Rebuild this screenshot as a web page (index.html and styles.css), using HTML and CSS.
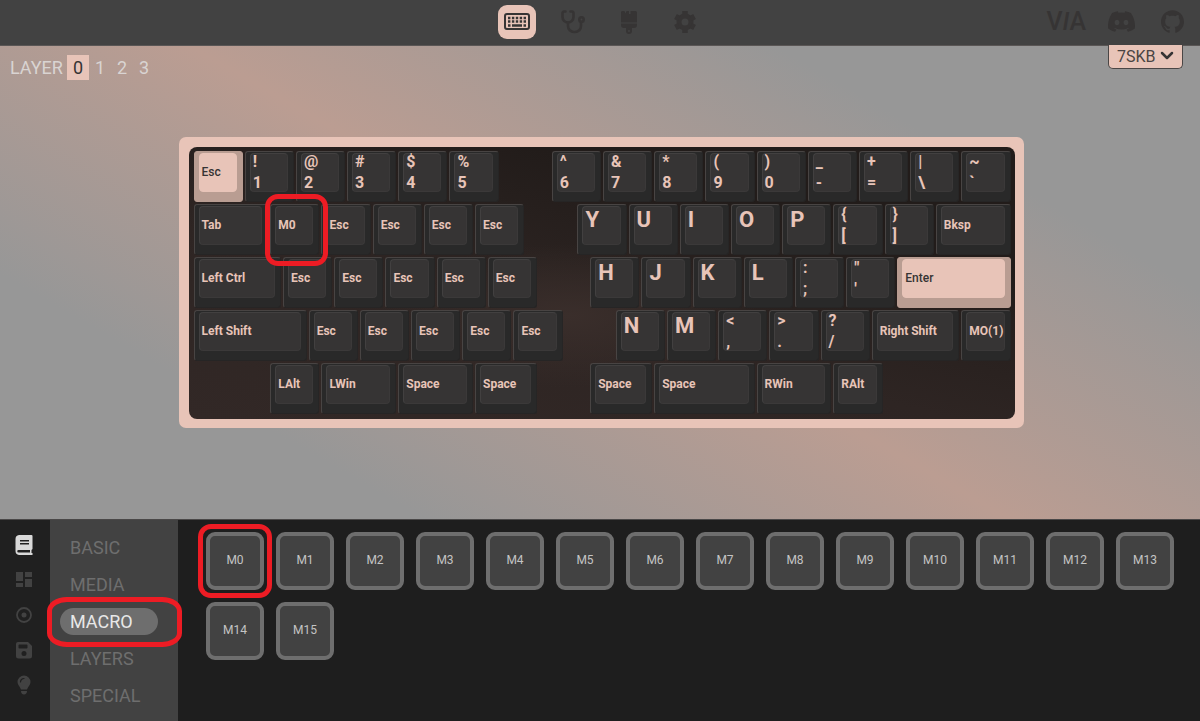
FILE: index.html
```html
<!DOCTYPE html>
<html lang="en">
<head>
  <meta charset="UTF-8" />
  <meta name="viewport" content="width=device-width, initial-scale=1.0"/>
  <title>VIA</title>
  <link rel="stylesheet" href="styles.css">
</head>
<body>
  <header class="topbar">
    <nav class="tabs">
      <a href="#configure" class="tab active" aria-label="Configure">
        <svg width="26" height="18" viewBox="0 0 26 18">
          <rect x="1" y="1" width="24" height="15" rx="2" fill="none" stroke="currentColor" stroke-width="2"/>
          <path d="M4 5h18M4 8.5h18" stroke="currentColor" stroke-width="2.4" stroke-dasharray="2.4 1.5"/>
          <path d="M4 12.5h2.5M8 12.5h10M19.5 12.5H22" stroke="currentColor" stroke-width="2.4"/>
        </svg>
      </a>
      <a href="#test" class="tab" aria-label="Key tester">
        <svg width="24" height="24" viewBox="0 0 24 24" fill="none" stroke="currentColor" stroke-width="2.6" stroke-linecap="round">
          <path d="M4.500 1.500H3a1.500 1.500 0 0 0-1.500 1.500v4a5.500 5.500 0 0 0 11 0V3A1.500 1.500 0 0 0 11 1.500H9.500"/>
          <path d="M7 12.500V16a6 6 0 0 0 6 6h1a6 6 0 0 0 6-6v-3.500"/>
          <circle cx="20.500" cy="9.500" r="2.200"/>
        </svg>
      </a>
      <a href="#design" class="tab" aria-label="Design">
        <svg width="18" height="24" viewBox="0 0 18 24" fill="currentColor">
          <path d="M2 1h2.500l1 2.500L6.500 1H9v3h1.500V1h5A1.500 1.500 0 0 1 17 2.500V12.500H1V2.500A1.500 1.500 0 0 1 2 1z"/>
          <path fill-rule="evenodd" d="M1 13.500h16V15a3 3 0 0 1-3 3h-2v3a3 3 0 0 1-6 0v-3H4a3 3 0 0 1-3-3zM9 20a1 1 0 1 0 0 2 1 1 0 0 0 0-2z"/>
        </svg>
      </a>
      <a href="#settings" class="tab" aria-label="Settings">
        <svg width="24" height="24" viewBox="0 0 24 24" stroke="currentColor" fill="none">
          <circle cx="12" cy="12" r="6" stroke-width="5"/>
          <path d="M12 1v4M12 19v4M2.500 6.500l3.500 2M18 15.500l3.500 2M2.500 17.500l3.500-2M18 8.500l3.500-2" stroke-width="5.500"/>
        </svg>
      </a>
    </nav>
    <div class="links">
      <a href="#via" class="logo">V<i>I</i>A</a>
      <a href="#discord" aria-label="Discord">
        <svg width="27" height="27" viewBox="0 0 24 24" fill="currentColor"><path d="M20.317 4.370a19.790 19.790 0 0 0-4.885-1.515.074.074 0 0 0-.079.037c-.210.375-.444.864-.608 1.250a18.270 18.270 0 0 0-5.487 0 12.640 12.640 0 0 0-.617-1.250.077.077 0 0 0-.079-.037A19.736 19.736 0 0 0 3.677 4.370a.070.070 0 0 0-.032.027C.533 9.046-.320 13.580.099 18.057a.082.082 0 0 0 .031.057 19.900 19.900 0 0 0 5.993 3.030.078.078 0 0 0 .084-.028c.462-.630.874-1.295 1.226-1.994a.076.076 0 0 0-.041-.106 13.107 13.107 0 0 1-1.872-.892.077.077 0 0 1-.008-.128c.126-.094.252-.192.372-.292a.074.074 0 0 1 .077-.010c3.928 1.793 8.180 1.793 12.062 0a.074.074 0 0 1 .078.010c.120.098.246.198.373.292a.077.077 0 0 1-.006.127 12.299 12.299 0 0 1-1.873.892.077.077 0 0 0-.041.107c.360.698.772 1.362 1.225 1.993a.076.076 0 0 0 .084.028 19.839 19.839 0 0 0 6.002-3.030.077.077 0 0 0 .032-.054c.500-5.177-.838-9.674-3.549-13.660a.061.061 0 0 0-.031-.030zM8.020 15.330c-1.183 0-2.157-1.085-2.157-2.419 0-1.333.956-2.419 2.157-2.419 1.210 0 2.176 1.096 2.157 2.420 0 1.333-.956 2.418-2.157 2.418zm7.975 0c-1.183 0-2.157-1.085-2.157-2.419 0-1.333.955-2.419 2.157-2.419 1.210 0 2.176 1.096 2.157 2.420 0 1.333-.946 2.418-2.157 2.418z"/></svg>
      </a>
      <a href="#github" aria-label="GitHub">
        <svg width="23" height="23" viewBox="0 0 24 24" fill="currentColor"><path d="M12 .297c-6.630 0-12 5.373-12 12 0 5.303 3.438 9.800 8.205 11.385.600.113.820-.258.820-.577 0-.285-.010-1.040-.015-2.040-3.338.724-4.042-1.610-4.042-1.610C4.422 18.070 3.633 17.700 3.633 17.700c-1.087-.744.084-.729.084-.729 1.205.084 1.838 1.236 1.838 1.236 1.070 1.835 2.809 1.305 3.495.998.108-.776.417-1.305.760-1.605-2.665-.300-5.466-1.332-5.466-5.930 0-1.310.465-2.380 1.235-3.220-.135-.303-.540-1.523.105-3.176 0 0 1.005-.322 3.300 1.230.960-.267 1.980-.399 3-.405 1.020.006 2.040.138 3 .405 2.280-1.552 3.285-1.230 3.285-1.230.645 1.653.240 2.873.120 3.176.765.840 1.230 1.910 1.230 3.220 0 4.610-2.805 5.625-5.475 5.920.420.360.810 1.096.810 2.220 0 1.606-.015 2.896-.015 3.286 0 .315.210.690.825.570C20.565 22.092 24 17.592 24 12.297c0-6.627-5.373-12-12-12"/></svg>
      </a>
    </div>
  </header>

  <main class="canvas">
    <div class="layers">
      <span class="layers-label">LAYER</span>
      <button type="button" class="layer active">0</button>
      <button type="button" class="layer">1</button>
      <button type="button" class="layer">2</button>
      <button type="button" class="layer">3</button>
    </div>

    <div class="device">
      <select aria-label="Keyboard">
        <option>7SKB</option>
      </select>
      <svg width="14" height="10" viewBox="0 0 14 10"><path d="M2 2l5 5 5-5" fill="none" stroke="currentColor" stroke-width="2.500" stroke-linecap="round" stroke-linejoin="round"/></svg>
    </div>

    <div class="case">
      <div class="plate" id="plate"></div>
    </div>
  </main>

  <section class="panel">
    <nav class="rail">
      <a href="#keymap" class="active" aria-label="Keymap">
        <svg width="18" height="20" viewBox="0 0 18 20" fill="currentColor"><path fill-rule="evenodd" d="M4 0h12.500a1 1 0 0 1 1 1v13l-1 1v3h1v2H4a4 4 0 0 1-3.500-4V4A4 4 0 0 1 4 0zM5 5v1.500h9V5zm0 3v1.500h9V8zM3.500 15a1 1 0 0 0 0 2.500H15V15z"/></svg>
      </a>
      <a href="#layouts" aria-label="Layouts">
        <svg width="16" height="16" viewBox="0 0 16 16" fill="currentColor"><path d="M0 0h7v9H0zM9 0h7v5H9zM0 11h7v4H0zM9 7h7v8H9z"/></svg>
      </a>
      <a href="#record" aria-label="Macros">
        <svg width="18" height="18" viewBox="0 0 18 18"><circle cx="9" cy="9" r="7" fill="none" stroke="currentColor" stroke-width="1.800"/><circle cx="9" cy="9" r="2.500" fill="currentColor"/></svg>
      </a>
      <a href="#save" aria-label="Save and load">
        <svg width="18" height="18" viewBox="0 0 18 18" fill="currentColor"><path fill-rule="evenodd" d="M3 1h10l4 4v10a2.500 2.500 0 0 1-2.500 2.500h-11A2.500 2.500 0 0 1 1 15V3a2 2 0 0 1 2-2zm1 2.500a1 1 0 0 0-.500 1V6.500a1 1 0 0 0 1 1h7a1 1 0 0 0 1-1v-2a1 1 0 0 0-1-1zM9 10a2.500 2.500 0 1 0 0 5 2.500 2.500 0 0 0 0-5z"/></svg>
      </a>
      <a href="#lighting" aria-label="Lighting">
        <svg width="14" height="20" viewBox="0 0 14 20"><path d="M7 .5A6.500 6.500 0 0 0 .5 7c0 3 2.500 4.500 3.500 7.500h6c1-3 3.500-4.500 3.500-7.500A6.500 6.500 0 0 0 7 .500zM4 16h6c0 2-1.200 3.500-3 3.500S4 18 4 16z" fill="currentColor"/><path d="M3.500 7A3.500 3.500 0 0 1 7 3.500" fill="none" stroke="#202020" stroke-width="1.200" stroke-linecap="round"/></svg>
      </a>
    </nav>

    <nav class="menu">
      <a href="#basic">BASIC</a>
      <a href="#media">MEDIA</a>
      <a href="#macro" class="active">MACRO<span class="mark mark-menu"></span></a>
      <a href="#layers">LAYERS</a>
      <a href="#special">SPECIAL</a>
    </nav>

    <div class="keycodes">
      <button type="button">M0<span class="mark mark-code"></span></button>
      <button type="button">M1</button>
      <button type="button">M2</button>
      <button type="button">M3</button>
      <button type="button">M4</button>
      <button type="button">M5</button>
      <button type="button">M6</button>
      <button type="button">M7</button>
      <button type="button">M8</button>
      <button type="button">M9</button>
      <button type="button">M10</button>
      <button type="button">M11</button>
      <button type="button">M12</button>
      <button type="button">M13</button>
      <button type="button">M14</button>
      <button type="button">M15</button>
    </div>
  </section>

  <script src="script.js"></script>
</body>
</html>
```
FILE: styles.css
```css
* {
  box-sizing: border-box;
}

body {
  font-family: Roboto, "Open Sans", sans-serif;
  display: flex;
  flex-direction: column;
  min-height: 100vh;
  margin: 0;
  background: #1e1e1e;
  color: #d9d9d9;
}

a {
  color: inherit;
  text-decoration: none;
}

button, select {
  font-family: inherit;
  cursor: pointer;
}

svg {
  display: block;
}

/* top bar */
.topbar {
  display: grid;
  grid-template-columns: 1fr auto 1fr;
  align-items: center;
  height: 46px;
  padding-bottom: 2px;
  background: #424242;
  border-bottom: 1px solid #5a5655;
  color: #363434;
}

.tabs {
  grid-column: 2;
  display: flex;
  gap: 18px;
  padding-left: 2px;
}

.tab {
  display: flex;
  align-items: center;
  justify-content: center;
  width: 38px;
  height: 34px;
  border-radius: 9px;
}

.tab.active {
  background: #e8c4b8;
}

.links {
  display: flex;
  align-items: center;
  justify-content: flex-end;
  gap: 22px;
  padding-right: 16px;
}

.links a:nth-child(2) {
  margin-right: 4px;
}

.logo {
  font-size: 25px;
  line-height: 26px;
  font-weight: 500;
}

/* keyboard area */
.canvas {
  position: relative;
  flex: 1;
  display: flex;
  align-items: center;
  justify-content: center;
  padding: 39px 15px 40px 17px;
  background: linear-gradient(30deg, #979797 21%, #bb9d92 50%, #979797 79%);
}

.layers {
  position: absolute;
  top: 9px;
  left: 10px;
  display: flex;
  align-items: center;
  font-size: 18px;
}

.layers-label {
  width: 57px;
  color: #d9d4d2;
}

.layer {
  width: 22px;
  height: 25px;
  padding: 0;
  border: none;
  background: none;
  color: #d9d4d2;
  font-size: 18px;
}

.layer.active {
  background: #e8c4b8;
  color: #363434;
}

.device {
  position: absolute;
  top: -1px;
  right: 17px;
  color: #363434;
}

.device select {
  appearance: none;
  width: 75px;
  height: 24px;
  padding: 0 8px;
  border: 1px solid #4a4645;
  border-top: none;
  border-radius: 0 0 5px 5px;
  background: #e8c4b8;
  color: #4a4443;
  font-size: 16px;
}

.device svg {
  position: absolute;
  top: 6px;
  right: 9px;
  pointer-events: none;
}

.case {
  width: 845px;
  max-width: 100%;
  padding: 10px 9px 9px 10px;
  border-radius: 7px;
  background: #e8c4b8;
}

.plate {
  display: grid;
  grid-template-columns: repeat(64, 1fr);
  grid-auto-rows: 53px;
  padding: 4px 2px 3px 5px;
  border-radius: 8px;
  background:
    radial-gradient(ellipse at 46% 62%, #3a2e2b 0%, transparent 30%),
    linear-gradient(14deg, #322826, #2e2523 40%, #221c1a 75%);
}

.key {
  position: relative;
  margin: 0 2px 2px 0;
  padding: 1px 5px 9px 4px;
  border: 1px solid #262525;
  border-top-color: #484443;
  border-left-color: #484443;
  border-radius: 3px;
  background: #292929;
  color: #e8c4b8;
  font-size: 12px;
  font-weight: 700;
  line-height: 14px;
  text-align: left;
}

.cap {
  display: flex;
  flex-direction: column;
  justify-content: center;
  height: 100%;
  padding-left: 2px;
  border: 1px solid #3b3939;
  border-top-color: #424040;
  border-left-color: #424040;
  border-radius: 4px;
  background: #363434;
  white-space: nowrap;
}

.key.letter .cap {
  justify-content: flex-start;
  font-size: 22px;
  line-height: 26px;
}

.key.double .cap {
  font-size: 16px;
  line-height: 21px;
}

.key.accent {
  border-color: #b99d92;
  background: #b99d92;
  color: #363434;
  font-weight: 500;
}

.key.accent .cap {
  border-color: #e8c4b8;
  background: #e8c4b8;
}

/* bottom panel */
.panel {
  display: flex;
  height: 202px;
  border-top: 1px solid #4a4848;
}

.rail {
  display: flex;
  flex-direction: column;
  align-items: center;
  gap: 5px;
  width: 50px;
  padding: 10px 2px 0 0;
  background: #202020;
  color: #424242;
}

.rail a {
  display: flex;
  align-items: center;
  height: 30px;
}

.rail .active {
  color: #d9d9d9;
}

.menu {
  display: flex;
  flex-direction: column;
  align-items: flex-start;
  gap: 10px;
  width: 128px;
  padding: 14px 10px 0;
  background: #424242;
  color: #6e6e6e;
  font-size: 18px;
  line-height: 27px;
}

.menu a {
  position: relative;
  width: 98px;
  padding-left: 10px;
  border-radius: 14px;
}

.menu .active {
  background: #6e6e6e;
  color: #e8e8e8;
}

.keycodes {
  flex: 1;
  display: flex;
  flex-wrap: wrap;
  align-content: flex-start;
  gap: 12px;
  padding: 12px 24px 12px 28px;
}

.keycodes button {
  position: relative;
  width: 58px;
  height: 58px;
  padding: 0 0 2px;
  border: 4px solid #6e6e6e;
  border-radius: 9px;
  background: #424242;
  color: #c4c4c4;
  font-size: 12px;
}

/* red outlines */
.mark {
  position: absolute;
  z-index: 1;
  border: 5px solid #ed1c24;
  border-radius: 13px;
  pointer-events: none;
}

.mark-key {
  inset: -11px -10px -12px -6px;
}

.mark-menu {
  inset: -11px -24px -12px -13px;
  border-radius: 20px / 14px;
}

.mark-code {
  inset: -12px;
}
```
FILE: script.js
```js
// [label, start, width], positions in quarter units
const rows = [
  [["Esc", 0, 4, "accent"], ["! 1", 4, 4], ["@ 2", 8, 4], ["# 3", 12, 4], ["$ 4", 16, 4], ["% 5", 20, 4],
   ["^ 6", 28, 4], ["& 7", 32, 4], ["* 8", 36, 4], ["( 9", 40, 4], [") 0", 44, 4], ["_ -", 48, 4], ["+ =", 52, 4], ["| \\", 56, 4], ["~ `", 60, 4]],
  [["Tab", 0, 6], ["M0", 6, 4, "marked"], ["Esc", 10, 4], ["Esc", 14, 4], ["Esc", 18, 4], ["Esc", 22, 4],
   ["Y", 30, 4], ["U", 34, 4], ["I", 38, 4], ["O", 42, 4], ["P", 46, 4], ["{ [", 50, 4], ["} ]", 54, 4], ["Bksp", 58, 6]],
  [["Left Ctrl", 0, 7], ["Esc", 7, 4], ["Esc", 11, 4], ["Esc", 15, 4], ["Esc", 19, 4], ["Esc", 23, 4],
   ["H", 31, 4], ["J", 35, 4], ["K", 39, 4], ["L", 43, 4], [": ;", 47, 4], ["\" '", 51, 4], ["Enter", 55, 9, "accent"]],
  [["Left Shift", 0, 9], ["Esc", 9, 4], ["Esc", 13, 4], ["Esc", 17, 4], ["Esc", 21, 4], ["Esc", 25, 4],
   ["N", 33, 4], ["M", 37, 4], ["< ,", 41, 4], ["> .", 45, 4], ["? /", 49, 4], ["Right Shift", 53, 7], ["MO(1)", 60, 4]],
  [["LAlt", 6, 4], ["LWin", 10, 6], ["Space", 16, 6], ["Space", 22, 5],
   ["Space", 31, 5], ["Space", 36, 8], ["RWin", 44, 6], ["RAlt", 50, 4]]
];

const plate = document.getElementById("plate");

rows.forEach((row, r) => {
  row.forEach(([label, start, width, type]) => {
    const key = document.createElement("button");
    key.type = "button";
    key.className = "key";
    key.style.gridArea = `${r + 1} / ${start + 1} / auto / span ${width}`;

    const cap = document.createElement("span");
    cap.className = "cap";
    let legends = [label];
    if (label.length === 1) key.classList.add("letter");
    if (label.length === 3 && label[1] === " ") {
      key.classList.add("double");
      legends = label.split(" ");
    }
    legends.forEach(text => {
      const legend = document.createElement("span");
      legend.textContent = text;
      cap.appendChild(legend);
    });
    key.appendChild(cap);

    if (type === "accent") key.classList.add("accent");
    if (type === "marked") {
      const mark = document.createElement("span");
      mark.className = "mark mark-key";
      key.appendChild(mark);
    }
    plate.appendChild(key);
  });
});
```
